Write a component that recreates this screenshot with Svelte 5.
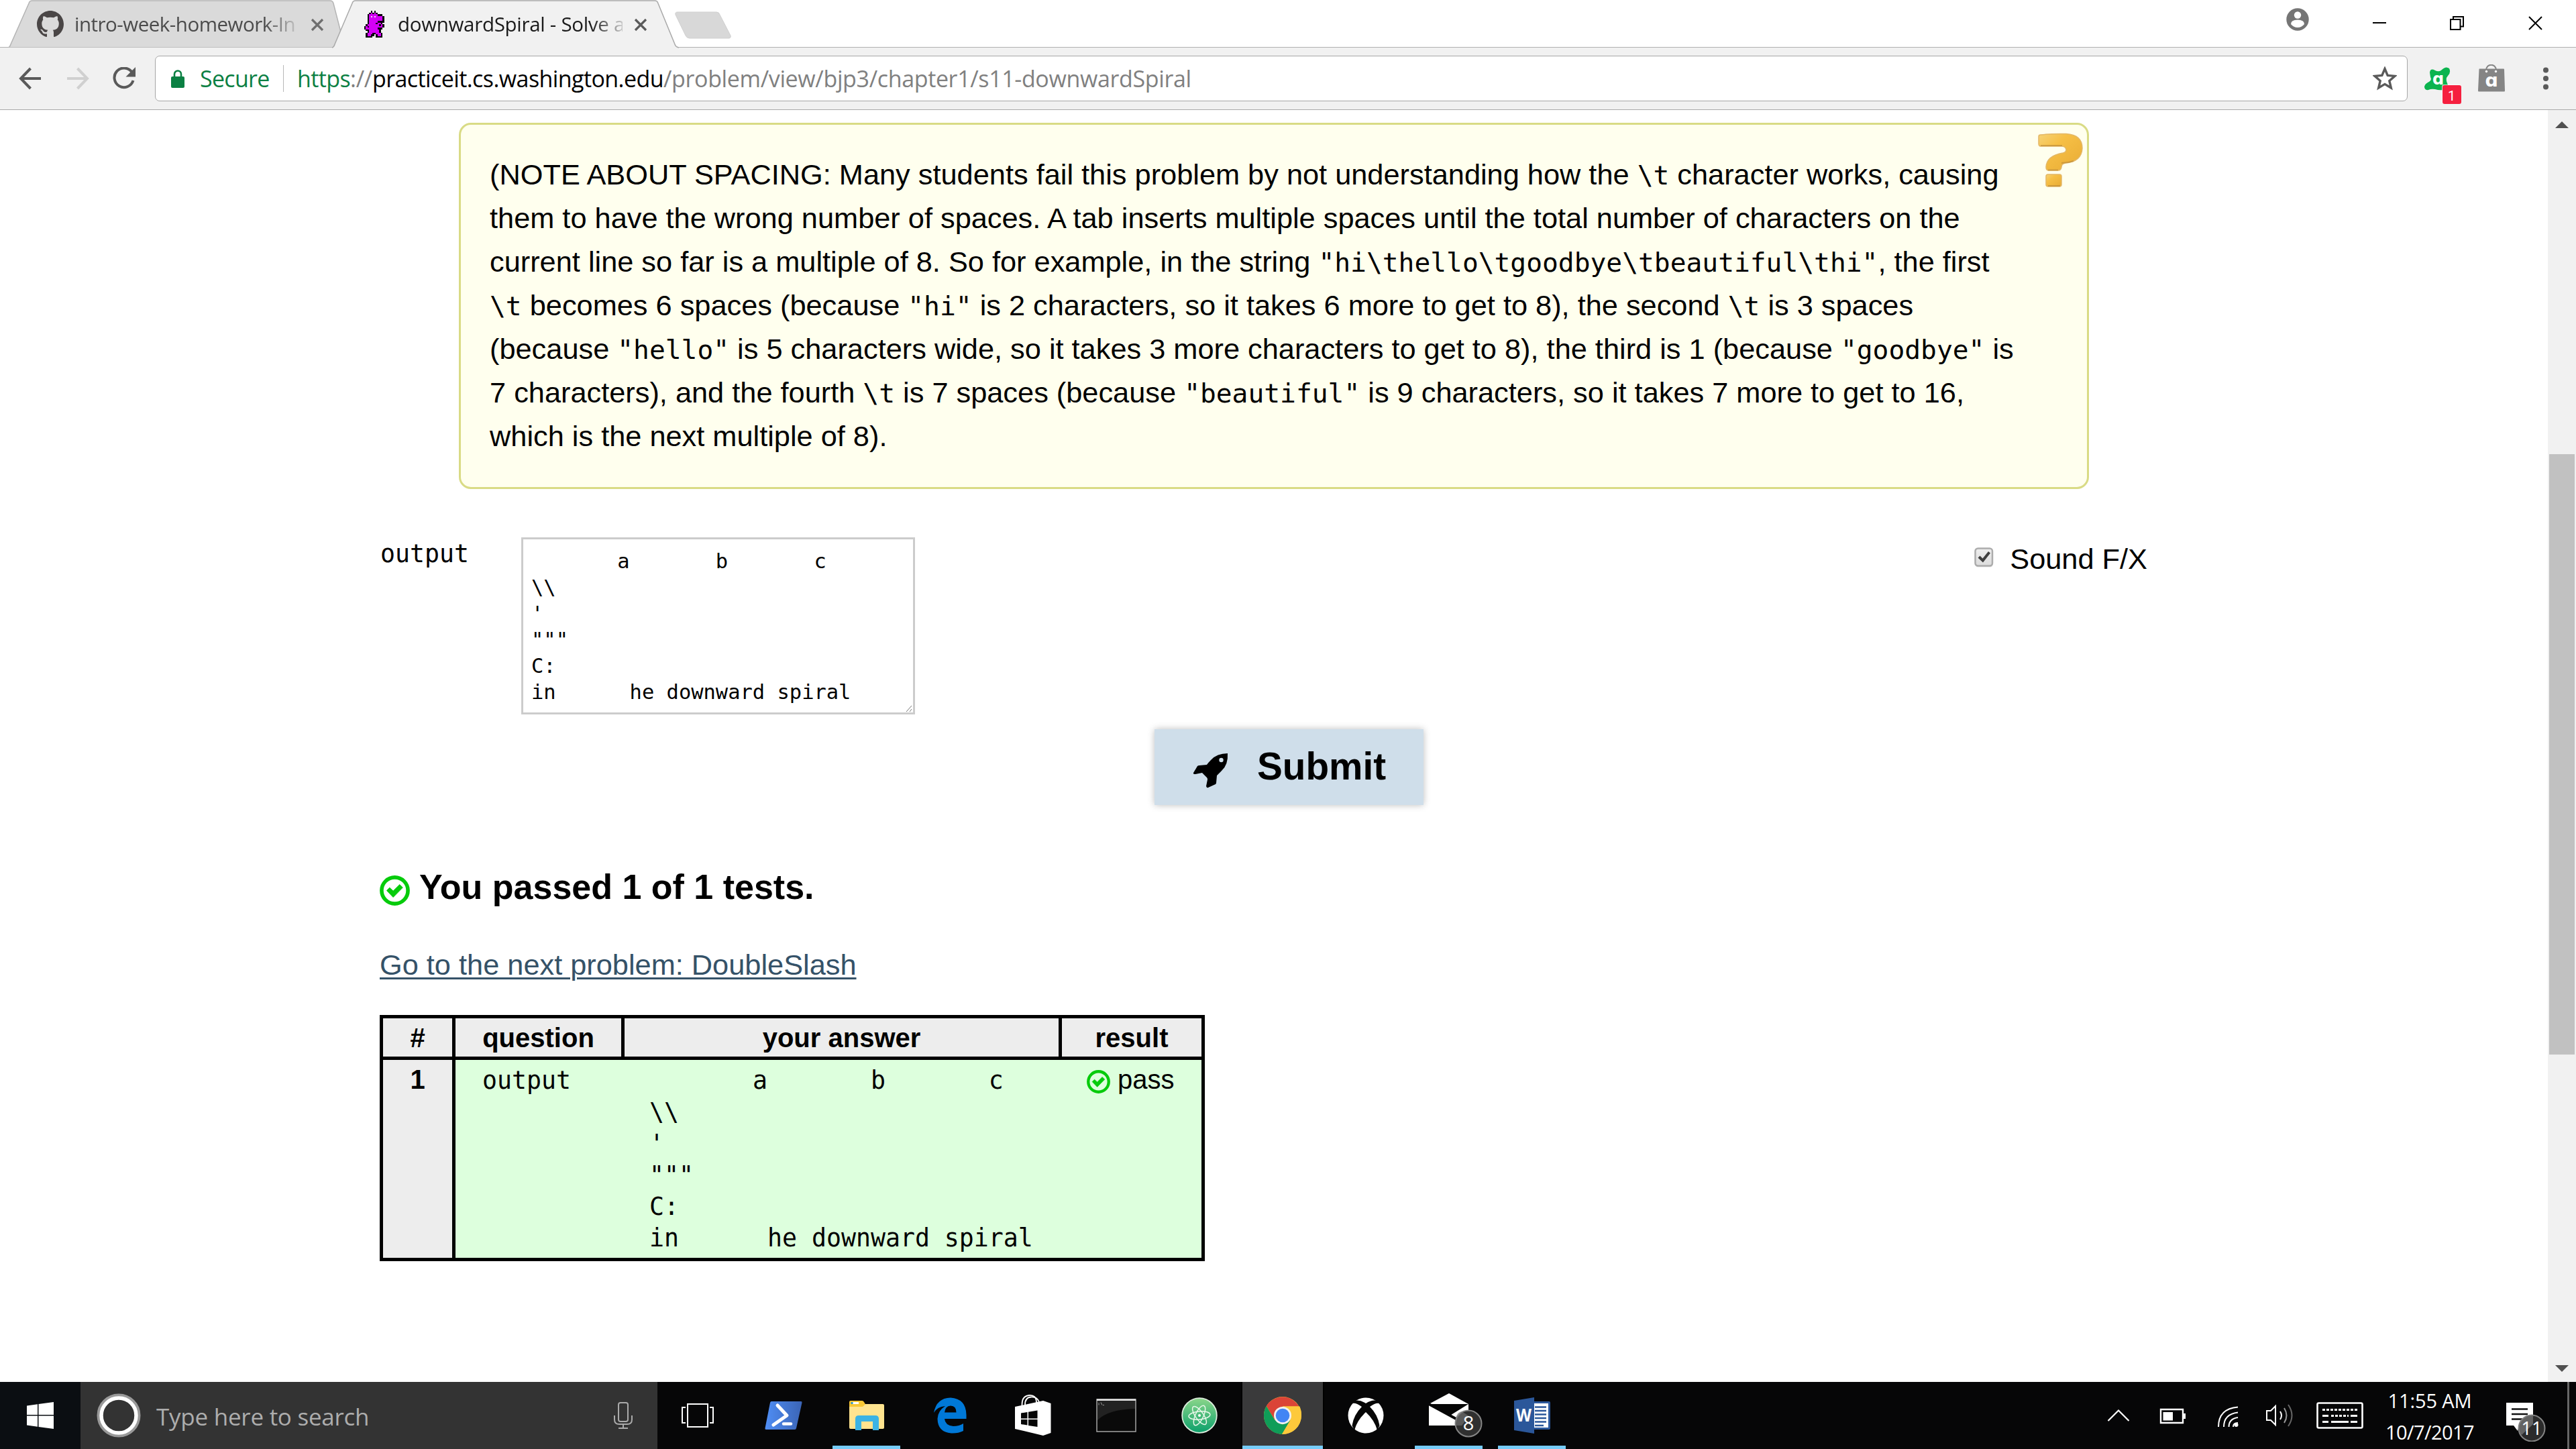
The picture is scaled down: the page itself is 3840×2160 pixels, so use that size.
<script>
  const monster = [
    '....K.K......',
    '...KMKMK.....',
    '..KMMMMMKKK..',
    '..KMWMWMMMMK.',
    '..KMMMMMMMMK.',
    '..KMMMMMMMMK.',
    '..KMMMMMKKKK.',
    '..KMMMMKMMK..',
    '.KMMMMMMMKMK.',
    'KMKMMMMMMMMK.',
    'KMMMMMMMKKK..',
    '.KKMMMMMMK...',
    '..KMMMMMMK...',
    '.KMMMKKMMMK..',
    '.KMMKK.KMMK..',
    '.KKKK..KKKK..'
  ];
  const palette = { K: '#0a000c', M: '#d400f5', W: '#f3d3f8' };
  const pixels = monster.flatMap((row, y) =>
    [...row].map((c, x) => ({ x, y, fill: palette[c] })).filter((p) => p.fill)
  );

  const answer = [
    '       a       b       c',
    '\\\\',
    "'",
    '"""',
    'C:',
    'in      he downward spiral'
  ].join('\n');
</script>

{#snippet tick(size)}
  <svg class="tick" width={size} height={size} viewBox="0 0 45 45">
    <circle cx="22.5" cy="22.5" r="19.6" fill="none" stroke="#06cb0b" stroke-width="5.6" />
    <path d="M10.500 22.500l4.300-4.300 5.300 5 9.700-9.600 4.500 4.500-14.200 14.400z" fill="#06cb0b" stroke="#06cb0b" stroke-width="1" stroke-linejoin="round" />
  </svg>
{/snippet}

<div class="screen">
  <header class="tabs">
    <div class="tab first">
      <svg class="shape" width="502" height="71" viewBox="0 0 502 71">
        <path d="M0 71q3-1 4-5L31 5q1-4 5-4H480q4 0 5 4L502 71z" fill="#dadada" stroke="#b4b4b4" stroke-width="1.500" />
      </svg>
      <svg width="40" height="40" viewBox="0 0 16 16"><path fill="#4a4646" d="M8 0C3.580 0 0 3.580 0 8c0 3.540 2.290 6.530 5.470 7.590.4.070.55-.17.55-.38 0-.19-.01-.82-.01-1.490-2.010.37-2.530-.49-2.690-.94-.09-.23-.48-.94-.82-1.130-.28-.15-.68-.52-.01-.53.63-.01 1.080.58 1.230.82.72 1.210 1.870.87 2.330.66.070-.52.28-.87.51-1.070-1.780-.2-3.640-.89-3.640-3.950 0-.87.31-1.590.82-2.150-.08-.2-.36-1.020.08-2.120 0 0 .67-.21 2.200.82.64-.18 1.320-.27 2-.27s1.360.09 2 .27c1.530-1.040 2.200-.82 2.200-.82.44 1.100.16 1.920.08 2.120.51.56.82 1.270.82 2.150 0 3.070-1.870 3.750-3.650 3.950.29.25.54.73.54 1.480 0 1.070-.01 1.930-.01 2.200 0 .21.15.46.55.38A8.010 8.010 0 0 0 16 8c0-4.420-3.580-8-8-8z" /></svg>
      <span class="title">intro-week-homework-In</span>
      <svg class="x" width="20" height="20" viewBox="0 0 20 20"><path d="M2 2l16 16M18 2L2 18" stroke="#6e6e6e" stroke-width="3.200" /></svg>
    </div>
    <div class="tab second">
      <svg class="shape" width="518" height="73" viewBox="0 0 518 73">
        <path d="M0 73V71q3-1 4-5L30 5q1-4 5-4H481q4 0 5 4L511 66q1 4 6 5V73z" fill="#f1f1f1" />
        <path d="M0 71q3-1 4-5L30 5q1-4 5-4H481q4 0 5 4L511 66q1 4 6 5" fill="none" stroke="#a9a9a9" stroke-width="1.500" />
      </svg>
      <svg class="pet" width="32" height="40" viewBox="0 0 13 16" preserveAspectRatio="none" shape-rendering="crispEdges">
        {#each pixels as p}<rect x={p.x} y={p.y} width="1.020" height="1.020" fill={p.fill} />{/each}
      </svg>
      <span class="title">downwardSpiral - Solve a</span>
      <svg class="x" width="20" height="20" viewBox="0 0 20 20"><path d="M2 2l16 16M18 2L2 18" stroke="#5a5a5a" stroke-width="3.200" /></svg>
    </div>
    <svg class="newtab" width="86" height="42" viewBox="0 0 86 42"><path d="M4 1H62q4 0 5 4l16 31q1 4-3 4H22q-4 0-6-4L1 5q-1-4 3-4z" fill="#d8d8d8" stroke="#cfcfcf" stroke-width="1" /></svg>
    <div class="win">
      <svg class="user" width="34" height="34" viewBox="0 0 34 34"><circle cx="17" cy="17" r="16.700" fill="#757575" /><circle cx="17" cy="10.500" r="5.200" fill="#fff" /><path d="M7 24q0-6.500 10-6.500T27 24q-4 5-10 5T7 24z" fill="#fff" /></svg>
      <svg class="min" width="20" height="20"><path d="M0 10h20" stroke="#000" stroke-width="2" /></svg>
      <svg class="max" width="21" height="21" viewBox="0 0 21 21" fill="none" stroke="#000" stroke-width="2"><path d="M1 5h14.500v15H1zM5 5V1h15v14.500h-4" /></svg>
      <svg width="21" height="21" viewBox="0 0 21 21"><path d="M1 1l19 19M20 1L1 20" stroke="#000" stroke-width="2" /></svg>
    </div>
  </header>

  <nav class="toolbar">
    <svg class="back" width="34" height="34" viewBox="0 0 34 34" fill="none" stroke="#5a5a5a" stroke-width="4"><path d="M33 17H4M17.500 2L3 17l14.500 15" /></svg>
    <svg class="fwd" width="34" height="34" viewBox="0 0 34 34" fill="none" stroke="#d0d0d0" stroke-width="4"><path d="M1 17h29M16.500 2L31 17 16.500 32" /></svg>
    <svg class="reload" width="36" height="34" viewBox="0 0 36 34"><path d="M29.500 7.500A14.300 14.300 0 1 0 31.500 20" fill="none" stroke="#5a5a5a" stroke-width="4" /><path d="M35 0V14.500H20.500z" fill="#5a5a5a" /></svg>
    <div class="omni">
      <svg class="lock" width="20" height="27" viewBox="0 0 20 27"><rect y="10" width="20" height="17" rx="2" fill="#0b8043" /><path d="M5 11V6.500a5 5 0 0 1 10 0V11" fill="none" stroke="#0b8043" stroke-width="2.600" /></svg>
      <span class="secure">Secure</span>
      <span class="bar"></span>
      <span class="url"><i class="g">https</i>://<i class="k">practiceit.cs.washington.edu</i>/problem/view/bjp3/chapter1/s11-downwardSpiral</span>
      <svg class="star" width="36" height="36" viewBox="0 0 36 36"><path d="M18 3.500l4.200 10 10.800.9-8.200 7.100 2.500 10.500L18 26.400 8.700 32l2.500-10.500L3 14.400l10.800-.9z" fill="none" stroke="#5a5a5a" stroke-width="3.400" /></svg>
    </div>
    <svg class="avast" width="56" height="56" viewBox="0 0 56 56">
      <path d="M9 9q1-7 8-3 6 3 10-1Q33-1 38 3q3 6-2 11-4 4-1 11 4 8-6 10-6 1-12-1-6-1-10 1-6 1-6-5 1-4 5-6 7-3 4-8z" fill="#0cb44f" />
      <text x="13" y="27" class="alogo" font-size="24">ɑ</text>
      <rect x="27" y="27" width="29" height="29" rx="3" fill="#fff" opacity=".7" />
      <rect x="28" y="28" width="28" height="28" rx="3" fill="#f5203f" />
      <text x="36" y="51" class="num" font-size="20">1</text>
    </svg>
    <svg class="bag" width="42" height="42" viewBox="0 0 42 42">
      <path d="M3 6.500h36q1 0 1 1L41 39q0 1.500-1 1.500H2q-1 0-1-1.500L2.500 7.500q0-1 .5-1z" fill="#858585" />
      <path d="M13 9C13-2 28-2 28 9" fill="none" stroke="#858585" stroke-width="2" />
      <circle cx="13.500" cy="10.500" r="1.700" fill="#fff" /><circle cx="27.500" cy="10.500" r="1.700" fill="#fff" />
      <text x="11.500" y="33" class="alogo" font-size="27">ɑ</text>
    </svg>
    <svg class="dots" width="8" height="34" viewBox="0 0 8 34" fill="#5a5a5a"><circle cx="4" cy="4.500" r="4" /><circle cx="4" cy="17" r="4" /><circle cx="4" cy="29.500" r="4" /></svg>
  </nav>

  <div class="view">
    <main>
      <section class="note">
        <p>(NOTE ABOUT SPACING: Many students fail this problem by not understanding how the <code>\t</code> character works, causing</p>
        <p>them to have the wrong number of spaces. A tab inserts multiple spaces until the total number of characters on the</p>
        <p>current line so far is a multiple of 8. So for example, in the string <code>"hi\thello\tgoodbye\tbeautiful\thi"</code>, the first</p>
        <p><code>\t</code> becomes 6 spaces (because <code>"hi"</code> is 2 characters, so it takes 6 more to get to 8), the second <code>\t</code> is 3 spaces</p>
        <p>(because <code>"hello"</code> is 5 characters wide, so it takes 3 more characters to get to 8), the third is 1 (because <code>"goodbye"</code> is</p>
        <p>7 characters), and the fourth <code>\t</code> is 7 spaces (because <code>"beautiful"</code> is 9 characters, so it takes 7 more to get to 16,</p>
        <p>which is the next multiple of 8).</p>
        <svg class="help" width="68" height="82" viewBox="0 0 68 82">
          <defs><linearGradient id="gold" x1="0" y1="0" x2="1" y2="1"><stop offset="0" stop-color="#f6d377" /><stop offset=".35" stop-color="#f6bf45" /><stop offset="1" stop-color="#e8ab34" /></linearGradient></defs>
          <path d="M3 3Q20 1 42 1.500 66 3 66 23 65 43 41 45q-6 1-6 6-1 5-5 5H16q-4 0-4-5 1-17 25-21 5-1 5-5-1-5-7-5H4q-3 0-3-4V6q0-3 2-3z" fill="url(#gold)" stroke="#e3b765" stroke-width="1.500" />
          <rect x="12" y="62" width="23" height="18" rx="3" fill="url(#gold)" stroke="#e3b765" stroke-width="1.500" />
          <path d="M4 19H36M35 45q9 0 18-3M15 55.500h15M15 79h18" fill="none" stroke="#b98732" stroke-width="2" opacity=".6" />
        </svg>
      </section>

      <section class="form">
        <span class="label">output</span>
        <div class="area"><pre>{answer}</pre>
          <svg class="grip" width="10" height="10"><path d="M1 10L9 1M6 10l3-4" stroke="#777" stroke-width="1" /></svg>
        </div>
        <label class="sound">
          <svg width="29" height="31" viewBox="0 0 29 31">
            <defs><linearGradient id="cb" x1="0" y1="0" x2="0" y2="1"><stop offset="0" stop-color="#efefef" /><stop offset="1" stop-color="#dcdcdc" /></linearGradient></defs>
            <rect x="2" y="2.500" width="25.500" height="27" rx="4" fill="#e6e6e6" /><rect x="1.500" y="1.500" width="25.500" height="26" rx="4" fill="url(#cb)" stroke="#acacac" stroke-width="2.500" />
            <path d="M5.500 15.500l3-3 4 4 8.500-10.500 3 2.500L13 22.500z" fill="#404040" />
          </svg>
          <span>Sound F/X</span>
        </label>
      </section>

      <button class="submit">
        <svg width="53" height="53" viewBox="0 0 53 53"><path d="M52 1Q53 18 43 27l-7 7-1 11q0 1-1 2l-11 5q-2 1-3-2l2-10q0-2-1-3l-7-7-10 2Q0 32 1 30L7 20q1-1 3-1l11-1q2-3 6-7Q36 1 52 1z" fill="#000" /><circle cx="42.500" cy="11" r="3.200" fill="#cfdeea" /></svg>
        <span>Submit</span>
      </button>

      <h2>{@render tick(45)}<span>You passed 1 of 1 tests.</span></h2>
      <div class="next"><span class="link">Go to the next problem: DoubleSlash</span></div>

      <div class="table">
        <div class="th">#</div>
        <div class="th">question</div>
        <div class="th">your answer</div>
        <div class="th last">result</div>
        <div class="td n">1</div>
        <div class="td mono">output</div>
        <div class="td"><pre>{answer}</pre></div>
        <div class="td pass">{@render tick(35)}<span>pass</span></div>
      </div>
    </main>
    <aside class="scroll">
      <svg class="up" width="20" height="10"><path d="M0 10L10 0l10 10z" fill="#505050" /></svg>
      <div class="thumb"></div>
      <svg class="down" width="20" height="10"><path d="M0 0l10 10L20 0z" fill="#505050" /></svg>
    </aside>
  </div>

  <footer>
    <div class="start"><svg width="40" height="40" viewBox="0 0 40 40" fill="#fff"><path d="M0 5.500L16 3.200V19H0zM17.500 3L40 0v19H17.500zM0 20.500h16v16.300L0 34.500zM17.500 20.500H40V40L17.500 37z" /></svg></div>
    <div class="search">
      <svg width="66" height="66" viewBox="0 0 66 66" fill="none"><circle cx="33" cy="33" r="30" stroke="#999" stroke-width="5" /><circle cx="33" cy="33" r="26" stroke="#fff" stroke-width="5.500" /></svg>
      <span>Type here to search</span>
      <svg class="mic" width="28" height="40" viewBox="0 0 28 40" fill="none" stroke="#aaa" stroke-width="2"><rect x="7" y="1" width="14" height="28" rx="3" /><path d="M1 20v6q0 7 7 7h12q7 0 7-7v-6M14 33v6M7 39h14" /></svg>
    </div>
    <div class="app"><svg width="48" height="38" viewBox="0 0 48 38" fill="none" stroke="#fff" stroke-width="2"><path d="M9 2h30v34H9zM6 7H1v23h5M42 7h5v23h-5" /></svg></div>
    <div class="app"><svg width="58" height="44" viewBox="0 0 58 44"><defs><linearGradient id="ps"><stop offset="0" stop-color="#4f8ef5" /><stop offset="1" stop-color="#3b64b5" /></linearGradient></defs><path d="M11 1H55q2 0 1.500 2L48 41q-.5 2-2 2H3q-2 0-1.500-2L9 3q.5-2 2-2z" fill="url(#ps)" /><path d="M20 7l14 15L14 36" fill="none" stroke="#fff" stroke-width="5" stroke-linecap="round" stroke-linejoin="round" /><path d="M29 34.500h11" stroke="#fff" stroke-width="4.500" stroke-linecap="round" /></svg></div>
    <div class="app open"><svg width="54" height="46" viewBox="0 0 54 46"><path d="M1 3q0-2 2-2H20q2 0 3 2l3 5-3 5H1z" fill="#f9c834" /><path d="M1 10H20q2 0 3-2l2-2H51q2 0 2 2V41q0 2-2 2H3q-2 0-2-2z" fill="#ffe48f" /><path d="M4 4.500h11" stroke="#fff" stroke-width="3" /><path d="M3.500 4.500h3" stroke="#3399c8" stroke-width="3" /><path d="M10 45V28q0-5 5-5H40q5 0 5 5V45H36V32H19V45z" fill="#3bb3e4" /></svg></div>
    <div class="app"><svg width="50" height="54" viewBox="0 0 50 54"><path d="M1 23Q5 1 26 0.500 49 2 49.500 26V32H17q1 10 13 11 9 0 15-4V50q-8 4-18 3.500Q7 52 6.500 32 7 20 18 13 6 14 1 23zM17 22.500H34.500q0-10-8.500-10-8 .5-9 10z" fill="#0078d7" /></svg></div>
    <div class="app"><svg class="store" width="54" height="62" viewBox="0 0 54 62"><path d="M0 18L42 9l11.500 4V57L42 61 0 51z" fill="#fff" /><path d="M10.500 16Q10 2 21 1T32 12M15 15Q15 4 24 3.500 33 3 36 11" fill="none" stroke="#fff" stroke-width="1.800" /><path d="M9 27.500l9.500-1.500v9.500H9zM20 25.700L33.500 23.500v12H20zM9 37h9.500v8.500L9 44zM20 37h13.500v11L20 46z" fill="#060606" /></svg></div>
    <div class="app"><svg width="60" height="50" viewBox="0 0 60 50"><rect x="1" y="1" width="58" height="48" fill="#0a0a0a" stroke="#a5a5a5" stroke-width="1.500" /><path d="M2 3V32Q18 16 58 15V3z" fill="#222" /><path d="M1 1.800h58" stroke="#e3e3e3" stroke-width="2.500" /><path d="M4 6.500v3M7 5.500l2 4M10 9.500h2" stroke="#999" stroke-width="1" /></svg></div>
    <div class="app"><svg width="54" height="54" viewBox="0 0 54 54"><defs><linearGradient id="at" x1="0" y1="0" x2="0" y2="1"><stop offset="0" stop-color="#8bd68a" /><stop offset="1" stop-color="#0ba06b" /></linearGradient></defs><circle cx="27" cy="27" r="25.800" fill="url(#at)" stroke="#dcebdc" stroke-width="1.800" /><g fill="none" stroke="#e9f7ea" stroke-width="1.500"><ellipse cx="27" cy="27" rx="6" ry="16" transform="rotate(25 27 27)" /><ellipse cx="27" cy="27" rx="6" ry="16" transform="rotate(-35 27 27)" /><ellipse cx="27" cy="27" rx="6" ry="16" transform="rotate(85 27 27)" /></g><circle cx="27" cy="27" r="2" fill="#fff" /></svg></div>
    <div class="app open active"><svg width="56" height="56" viewBox="0 0 56 56"><circle cx="28" cy="28" r="28" fill="#fdc93b" /><path d="M3.750 14A28 28 0 0 1 52.200 14.500H28L16.300 34.700z" fill="#db4437" /><path d="M3.750 14A28 28 0 0 0 27 56L39.700 34.750 28 41.500 16.300 34.750z" fill="#0f9d58" /><path d="M28 14.500H53.500q3 7 2.400 15A28 28 0 0 1 27 56L39.700 34.750z" fill="#fdc93b" /><circle cx="28" cy="28" r="13" fill="#f1f1f1" /><circle cx="28" cy="28" r="10.300" fill="#4285f4" /></svg></div>
    <div class="app"><svg width="54" height="54" viewBox="0 0 54 54"><circle cx="27" cy="27" r="26.500" fill="#fff" /><path d="M10 5Q18 3 27 9 36 3 44 5l5 5Q44 6 33 14 45 26 47.500 42L44 49Q40 34 27 22 14 34 10 49L6.500 42Q9 26 21 14 10 6 5 10z" fill="#060606" /></svg></div>
    <div class="app open mail"><svg width="84" height="74" viewBox="0 0 84 74"><path d="M2 20L32 4l29 16V52H2z" fill="#fff" /><path d="M2 20H61L32 38z" fill="#060606" /><path d="M2 20L48 45" stroke="#060606" stroke-width="4" /><circle cx="61" cy="49" r="19.500" fill="#303030" stroke="#858585" stroke-width="2" /><path d="M43 52V38q2-6 8-7l11 7-11 14z" fill="#777" opacity=".6" /><text x="61" y="59" text-anchor="middle" class="badge">8</text></svg></div>
    <div class="app open"><svg width="56" height="54" viewBox="0 0 56 54"><path d="M28 6H53q2 0 2 2V46q0 2-2 2H28z" fill="#2b579a" /><path d="M31 9H52V45H31z" fill="#fff" /><path d="M32 14.500H49M32 20H49M32 25.500H49M32 31H49M32 36.500H49M32 42H45" stroke="#2b579a" stroke-width="2.500" /><path d="M1 5L31 0V54L1 49z" fill="#2b579a" /><text x="4" y="36" class="w" textLength="23" lengthAdjust="spacingAndGlyphs">W</text></svg></div>

    <div class="tray">
      <svg class="t1" width="34" height="20" viewBox="0 0 34 20"><path d="M1.500 18L17 2.500 32.500 18" fill="none" stroke="#fff" stroke-width="2.200" /></svg>
      <svg class="t2" width="40" height="24" viewBox="0 0 40 24"><path d="M2 2h33v20H2z" fill="none" stroke="#fff" stroke-width="2.400" /><path d="M5.500 6H20v12.500H5.500zM35 8h4v8h-4z" fill="#fff" /></svg>
      <svg class="t3" width="34" height="32" viewBox="0 0 34 32" fill="none" stroke="#fff" stroke-width="2"><path d="M2 31Q2 4 31 1.500M10 31Q10 12 31 9.500M17.500 31Q17.500 19 31 17" /><path d="M31 25q-7 0-7 6" /><circle cx="28.500" cy="28" r="3" fill="#fff" stroke="none" /></svg>
      <svg class="t4" width="44" height="38" viewBox="0 0 44 38" fill="none" stroke="#fff" stroke-width="2"><path d="M2 12h6l7-7v28l-7-7H2z" /><path d="M22 13q4 6 0 12" /><path d="M28 8q7 11 0 22" stroke="#999" /><path d="M34 3q11 16 0 32" stroke="#666" /></svg>
      <svg class="t5" width="70" height="40" viewBox="0 0 70 40" fill="none" stroke="#fff"><rect x="1.500" y="1.500" width="67" height="37" rx="2" stroke-width="2.600" /><path d="M9 11.500h52M22 20.500h26" stroke-width="3" stroke-dasharray="4 2" /><path d="M9 20.500h9M51 20.500h10M9 29.500h9M22 29.500h26M51 29.500h10" stroke-width="3" /></svg>
      <div class="clock"><span class="time">11:55 AM</span><span>10/7/2017</span></div>
      <svg class="t6" width="60" height="60" viewBox="0 0 60 60"><path d="M1 2h40v34H20l-2 8-6-8H1z" fill="#fff" /><path d="M9 11.500h24M9 19h24M9 26.500h16" stroke="#111" stroke-width="2.400" /><circle cx="39" cy="40" r="19.500" fill="#2b2b2b" stroke="#858585" stroke-width="2" /><path d="M20 40q1-17 19-19.500h2V34l-17 16q-4-4-4-10z" fill="#777" opacity=".75" /><text x="39" y="49.500" text-anchor="middle" class="badge eleven">11</text></svg>
      <i class="peek"></i>
    </div>
  </footer>
</div>

<style>
  :global(body) { margin: 0; background: #fff; overflow: hidden; }
  .screen { width: 3840px; height: 2160px; display: flex; flex-direction: column; background: #fff; color: #000; font-family: "Liberation Sans", Arial, sans-serif; }
  svg { display: block; flex: none; }
  .tabs, .omni, footer { font-family: "Open Sans", "Noto Sans", sans-serif; white-space: nowrap; }

  .tabs { height: 70px; border-bottom: 1px solid #b0b0b0; display: flex; align-items: flex-start; background: #fff; }
  .tab { position: relative; height: 71px; display: flex; align-items: center; box-sizing: border-box; }
  .tab > * { position: relative; }
  .tab > .shape { position: absolute; left: 0; top: 0; }
  .first { margin-left: 12px; width: 502px; padding-left: 43px; }
  .second { width: 518px; margin-left: -19px; padding-left: 48px; z-index: 1; }
  .title { font-size: 29.5px; line-height: 40px; color: #4b4b4b; -webkit-mask-image: linear-gradient(90deg, #000 86%, transparent 103%); mask-image: linear-gradient(90deg, #000 86%, transparent 103%); }
  .first .title { margin-left: 16px; width: 330px; letter-spacing: -0.5px; }
  .second .title { margin-left: 18px; width: 335px; color: #1a1a1a; letter-spacing: -0.3px; }
  .first .x { margin-left: 22px; margin-top: 3px; }
  .second .x { margin-left: 17px; margin-top: 3px; }
  .newtab { margin: 17px 0 0 -7px; }
  .win { margin-left: auto; display: flex; align-items: center; height: 68px; padding-right: 50px; }
  .user { margin: -10px 95px 0 0; }
  .min { margin-right: 95px; }
  .max { margin-right: 96px; }

  .toolbar { height: 92px; border-bottom: 1px solid #a9a9a9; background: #f1f1f1; display: flex; align-items: center; }
  .back { margin-left: 28px; }
  .fwd { margin-left: 37px; }
  .reload { margin-left: 34px; }
  .omni { margin-left: 28px; width: 3356px; height: 66px; border: 1px solid #a6a6a6; border-radius: 7px; background: #fff; display: flex; align-items: center; font-size: 34px; line-height: 60px; }
  .lock { margin-left: 23px; }
  .secure { margin-left: 23px; color: #0b8043; width: 124px; letter-spacing: -0.7px; }
  .bar { width: 1px; height: 40px; background: #b8b8b8; }
  .url { margin-left: 20px; color: #808080; letter-spacing: -0.36px; }
  .url i { font-style: normal; }
  .g { color: #0b8043; letter-spacing: -0.6px; }
  .k { color: #000; letter-spacing: -0.58px; }
  .star { margin: 0 15px 0 auto; }
  .avast { margin: 20px 0 0 24px; }
  .bag { margin-left: 24px; }
  .dots { margin-left: 56px; }
  .alogo { font-family: "DejaVu Sans", sans-serif; font-weight: bold; fill: #fff; }
  .num { font-family: Roboto, sans-serif; fill: #fff; }

  .view { height: 1896px; display: flex; }
  main { flex: 1; display: flex; flex-direction: column; align-items: flex-start; }
  .note { position: relative; box-sizing: border-box; width: 2430px; height: 546px; margin: 19px 0 0 684px; padding: 42px 0 0 43px; border: 3px solid #d9db85; border-radius: 18px; background: #ffffee; }
  .note p { margin: 0; height: 65px; line-height: 65px; font-size: 43.33px; white-space: pre; }
  code, pre, .label, .mono { font-family: "DejaVu Sans Mono", monospace; }
  code { font-size: 39.58px; line-height: 1; }
  .help { position: absolute; right: 5px; top: 12px; }
  pre { margin: 0; }
  .form { display: flex; align-items: flex-start; margin: 72px 0 0 567px; height: 264px; width: 2659px; }
  .label { width: 210px; font-size: 36.54px; line-height: 46px; padding-top: 2px; }
  .area { position: relative; box-sizing: border-box; width: 587px; height: 264px; border: 3px solid #ccc; padding: 13px 0 0 12px; }
  .area pre { font-size: 30.45px; line-height: 39.1px; }
  .grip { position: absolute; right: 1px; bottom: 1px; }
  .sound { margin-left: auto; display: flex; padding: 9px 25px 0 0; font-size: 43.33px; line-height: 46px; }
  .sound svg { margin: 6px 24px 0 0; }
  .submit { margin: 22px 0 0 1721px; width: 401px; height: 113px; border: 0; padding: 0 0 0 57px; background: #cfdeea; box-shadow: 0 0 10px rgba(0, 0, 0, .26); display: flex; align-items: center; font: bold 56.7px/66px "Liberation Sans", Arial, sans-serif; color: #000; }
  .submit svg { margin-top: 10px; }
  .submit span { margin: -1px 0 0 43px; }
  h2 { margin: 92px 0 0 566px; display: flex; align-items: center; font-size: 52px; line-height: 60px; }
  h2 .tick { margin-top: 10px; }
  h2 span { margin-left: 14px; }
  .next { margin: 60px 0 0 566px; font-size: 43.33px; line-height: 52px; color: #355268; }
  .link { text-decoration: underline; text-decoration-thickness: 3px; text-underline-offset: 4px; }
  .table { margin: 49px 0 0 566px; box-sizing: border-box; width: 1230px; height: 367px; border: 5px solid #000; display: grid; grid-template-columns: 108px 252px 652px 208px; grid-template-rows: 62px 295px; background: #ddffdd; font-size: 40px; }
  .th { box-sizing: border-box; background: #ededed; border-right: 5px solid #000; border-bottom: 5px solid #000; font-weight: bold; text-align: center; line-height: 59px; }
  .th.last { border-right: 0; }
  .td { line-height: 58px; padding-left: 40px; }
  .n { box-sizing: border-box; background: #ededed; border-right: 5px solid #000; font-weight: bold; text-align: center; padding: 0; }
  .mono { font-size: 36.54px; line-height: 61px; }
  .td pre { font-size: 36.54px; line-height: 47.1px; padding-top: 7px; margin-left: -3px; }
  .pass { display: flex; height: 58px; padding-left: 38px; }
  .pass .tick { margin: 15px 11px 0 -1px; }

  .scroll { width: 42px; background: #f1f1f1; display: flex; flex-direction: column; align-items: center; }
  .up { margin-top: 17px; }
  .thumb { margin-top: 486px; width: 38px; height: 895px; background: #c1c1c1; }
  .down { margin-top: auto; margin-bottom: 15px; }

  footer { height: 100px; display: flex; background: #060607; color: #fff; }
  .start { width: 120px; display: grid; place-items: center; background: #0b0e12; }
  .search { width: 860px; background: #333; display: flex; align-items: center; color: #adadad; font-size: 35px; letter-spacing: -0.25px; }
  .search svg:first-child { margin-left: 24px; }
  .search span { margin: 2px 0 0 23px; }
  .search .mic { margin: 0 37px 0 auto; }
  .app { width: 124px; height: 100px; position: relative; display: grid; place-items: center; }
  .search + .app { width: 120px; padding-right: 6px; }
  .open::after { content: ""; position: absolute; left: 11px; right: 12px; bottom: 0; height: 5px; background: #76ccfa; }
  .active { background: linear-gradient(90deg, #000 0 2px, #3a3a3b 2px 122px, #000 122px); }
  .active::after { left: 2px; right: 2px; }
  .badge { font-size: 29px; fill: #fff; }
  .eleven { font-size: 27px; }
  .mail svg { margin: 0 0 0 20px; }
  .w { font-size: 27px; font-weight: bold; fill: #fff; font-family: "Open Sans", sans-serif; }
  .tray { margin-left: auto; display: flex; align-items: center; }
  .t2 { margin-left: 44px; margin-top: 2px; }
  .t3 { margin-left: 46px; margin-top: 4px; }
  .t4 { margin-left: 38px; }
  .t5 { margin-left: 32px; }
  .clock { width: 160px; margin-left: 19px; text-align: center; font-size: 29px; line-height: 47px; display: flex; flex-direction: column; letter-spacing: -0.6px; padding-top: 1px; }
  .time { letter-spacing: -0.1px; }
  .t6 { margin-left: 33px; margin-top: 18px; }
  .peek { width: 3px; height: 100px; background: #666; margin: 0 10px 0 32px; }
</style>
